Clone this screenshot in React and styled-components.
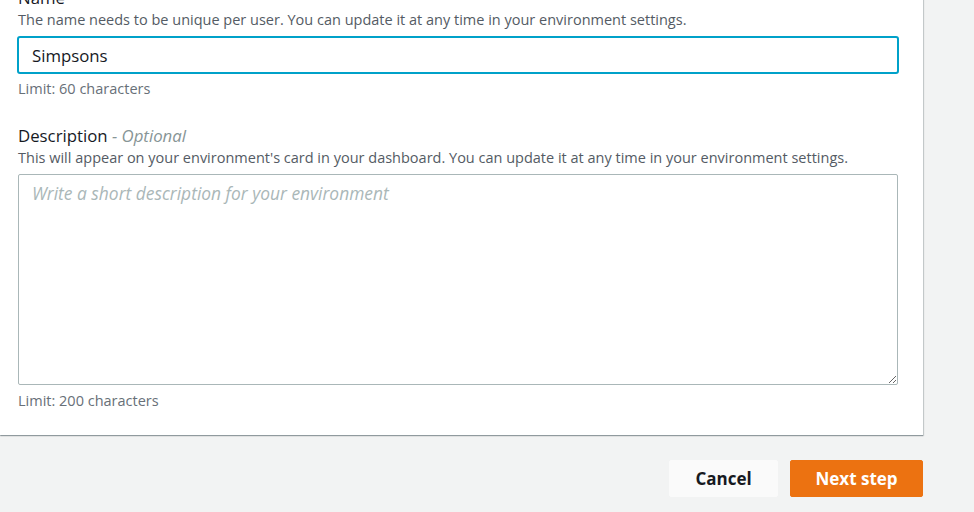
import React from 'react';
import styled, { createGlobalStyle } from 'styled-components';

const GlobalStyle = createGlobalStyle`
  html, body {
    margin: 0;
    padding: 0;
    background: #f2f3f3;
    font-family: "Open Sans", "Noto Sans", Arial, sans-serif;
    overflow: hidden;
  }
`;

const Page = styled.div`
  width: 974px;
  height: 512px;
  margin-top: -14px;
`;

const Card = styled.section`
  width: 880px;
  padding: 0 25px 24px 18px;
  background: #fff;
  box-shadow: 0 1px 1px 0 rgba(0, 28, 36, 0.3), 1px 1px 1px 0 rgba(0, 28, 36, 0.15);
  display: flex;
  flex-direction: column;
  gap: 25px;
`;

const Field = styled.div`
  display: flex;
  flex-direction: column;
`;

const Label = styled.label`
  font-size: 16.8px;
  line-height: 24px;
  color: #16191f;
`;

const Optional = styled.span`
  font-style: italic;
  color: #879596;
`;

const Hint = styled.div`
  font-size: 14.5px;
  line-height: 20px;
  color: #545b64;
  margin-bottom: ${({ gap }) => gap || 0}px;
`;

const Constraint = styled.div`
  margin-top: ${({ gap }) => gap || 5}px;
  font-size: 14.5px;
  line-height: 20px;
  color: #687078;
`;

const TextInput = styled.input`
  box-sizing: border-box;
  width: 882px;
  height: 38px;
  margin: 0 0 0 -1px;
  padding: 0 13px 0 13px;
  font-family: inherit;
  font-size: 16.8px;
  color: #16191f;
  background: #fff;
  border: 2px solid #00a1c9;
  border-radius: 3px;
  outline: none;
`;

const TextArea = styled.textarea`
  box-sizing: border-box;
  width: 880px;
  height: 211px;
  margin: 0;
  padding: 6px 13px;
  font-family: inherit;
  font-size: 16.8px;
  line-height: 24px;
  color: #16191f;
  border: 1px solid #aab7b8;
  border-radius: 2px;
  outline: none;
  resize: vertical;
  display: block;

  &::placeholder {
    font-style: italic;
    font-size: 17.4px;
    color: #aab7b8;
  }
`;

const Actions = styled.div`
  width: 923px;
  margin-top: 25px;
  display: flex;
  justify-content: flex-end;
  gap: 12px;
`;

const Button = styled.button`
  width: ${({ primary }) => (primary ? 133 : 109)}px;
  height: 37px;
  padding: 0;
  font-family: inherit;
  font-size: 17px;
  font-weight: 700;
  border-radius: 2px;
  border: 1px solid ${({ primary }) => (primary ? '#ec7211' : '#fafafa')};
  background: ${({ primary }) => (primary ? '#ec7211' : '#fafafa')};
  color: ${({ primary }) => (primary ? '#fff' : '#16191f')};
  cursor: pointer;
`;

export default function App() {
  return (
    <Page>
      <GlobalStyle />
      <Card>
        <Field>
          <Label>Name</Label>
          <Hint gap={6}>
            The name needs to be unique per user. You can update it at any time in your environment settings.
          </Hint>
          <TextInput defaultValue="Simpsons" />
          <Constraint>Limit: 60 characters</Constraint>
        </Field>
        <Field>
          <Label>
            Description <Optional>- Optional</Optional>
          </Label>
          <Hint gap={6}>
            This will appear on your environment's card in your dashboard. You can update it at any time in your environment settings.
          </Hint>
          <TextArea placeholder="Write a short description for your environment" />
          <Constraint gap={6}>Limit: 200 characters</Constraint>
        </Field>
      </Card>
      <Actions>
        <Button>Cancel</Button>
        <Button primary>Next step</Button>
      </Actions>
    </Page>
  );
}
